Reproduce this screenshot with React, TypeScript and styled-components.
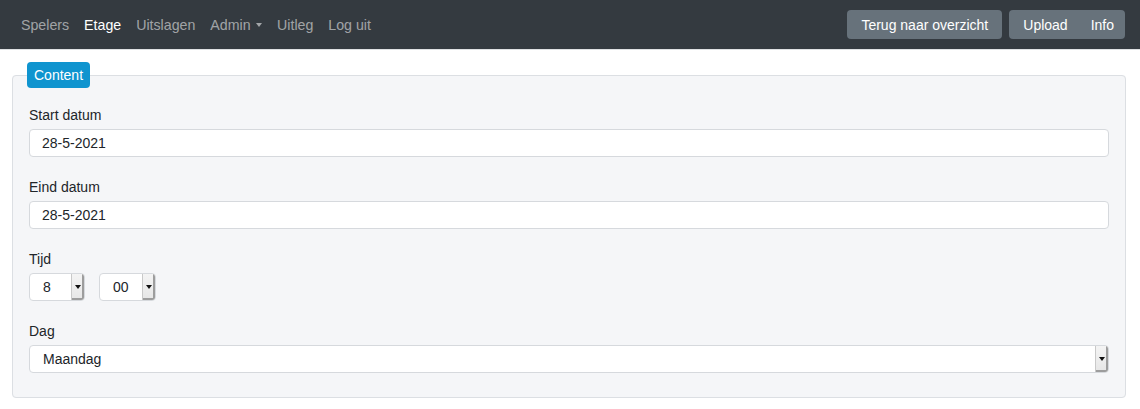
import React from "react";
import styled, { createGlobalStyle } from "styled-components";

const Global = createGlobalStyle`
  html, body { margin: 0; padding: 0; background: #ffffff; }
  body { font-family: "Liberation Sans", Arial, sans-serif; font-size: 14px; color: #212529; }
  * { box-sizing: border-box; }
`;

const NavBar = styled.nav`
  height: 49px;
  background: #343a40;
  display: flex;
  align-items: center;
  justify-content: space-between;
  padding: 0 15px 0 13.5px;
  box-shadow: 0 1px 0 #dfe1e3;
`;

const NavList = styled.ul`
  display: flex;
  list-style: none;
  margin: 0;
  padding: 0;
`;

const NavLink = styled.a<{ $active?: boolean }>`
  display: flex;
  align-items: center;
  padding: 0 7.5px;
  font-size: 14.2px;
  color: ${(p) => (p.$active ? "#ffffff" : "rgba(255,255,255,0.55)")};
  text-decoration: none;
  cursor: pointer;
`;

const Caret = styled.span`
  display: inline-block;
  margin-left: 5.5px;
  border-top: 4px solid currentColor;
  border-left: 3.5px solid transparent;
  border-right: 3.5px solid transparent;
`;

const Actions = styled.div`
  display: flex;
  gap: 7px;
`;

const Button = styled.button`
  height: 29px;
  padding: 0 14px;
  background: #67727b;
  color: #ffffff;
  border: none;
  border-radius: 4px;
  font-family: inherit;
  font-size: 14px;
  cursor: pointer;
`;

const ButtonGroup = styled.div`
  display: flex;
  background: #67727b;
  border-radius: 4px;
  & > ${Button} { border-radius: 0; background: transparent; }
  & > ${Button}:first-child { padding-right: 11px; }
  & > ${Button}:last-child { padding-left: 12px; padding-right: 11px; }
`;

const Main = styled.main`
  padding: 13px 14px 12px 12px;
`;

const Fieldset = styled.fieldset`
  margin: 0;
  padding: 0 16px 24px 16px;
  border: 1px solid #dcdfe3;
  border-radius: 4px;
  background: #f5f6f8;
  display: flex;
  flex-direction: column;
  gap: 20px;
`;

const Legend = styled.legend`
  margin-left: -2px;
  padding: 0 7px;
  height: 26px;
  line-height: 26px;
  background: #0f94cf;
  color: #ffffff;
  border-radius: 4px;
  font-size: 14px;
  margin-bottom: 17px;
`;

const Group = styled.div`
  display: flex;
  flex-direction: column;
  gap: 4px;
`;

const Label = styled.label`
  font-size: 14px;
  line-height: 20px;
  color: #212529;
`;

const Input = styled.input`
  height: 28px;
  width: 100%;
  padding: 0 12px;
  border: 1px solid #d6d9dd;
  border-radius: 4px;
  background: #ffffff;
  font-family: inherit;
  font-size: 14px;
  color: #212529;
  outline: none;
`;

const Row = styled.div`
  display: flex;
  gap: 14px;
`;

const SelectBox = styled.div<{ $width?: string }>`
  display: flex;
  height: 28px;
  width: ${(p) => p.$width ?? "100%"};
  border: 1px solid #d6d9dd;
  border-radius: 4px;
  background: #ffffff;
  overflow: hidden;
`;

const NativeSelect = styled.select`
  flex: 1;
  min-width: 0;
  appearance: none;
  -webkit-appearance: none;
  border: none;
  background: transparent;
  padding: 0 0 0 13px;
  font-family: inherit;
  font-size: 14px;
  color: #212529;
  outline: none;
`;

const Arrow = styled.span`
  width: 13px;
  flex: none;
  display: flex;
  align-items: center;
  justify-content: center;
  background: linear-gradient(#f4f4f4, #e6e6e6);
  border-left: 1px solid #c9c9c9;
  box-shadow: inset -2px -2px 0 #9d9d9d;
  &::after {
    content: "";
    margin: 0 1px 1px 0;
    border-top: 4px solid #111;
    border-left: 3px solid transparent;
    border-right: 3px solid transparent;
  }
`;

const Select: React.FC<{ value: string; width?: string; options: string[] }> = ({ value, width, options }) => (
  <SelectBox $width={width}>
    <NativeSelect defaultValue={value}>
      {options.map((o) => (
        <option key={o}>{o}</option>
      ))}
    </NativeSelect>
    <Arrow />
  </SelectBox>
);

export default function App() {
  return (
    <>
      <Global />
      <NavBar>
        <NavList>
          <li><NavLink>Spelers</NavLink></li>
          <li><NavLink $active>Etage</NavLink></li>
          <li><NavLink>Uitslagen</NavLink></li>
          <li><NavLink>Admin<Caret /></NavLink></li>
          <li><NavLink>Uitleg</NavLink></li>
          <li><NavLink>Log uit</NavLink></li>
        </NavList>
        <Actions>
          <Button>Terug naar overzicht</Button>
          <ButtonGroup>
            <Button>Upload</Button>
            <Button>Info</Button>
          </ButtonGroup>
        </Actions>
      </NavBar>
      <Main>
        <Fieldset>
          <Legend>Content</Legend>
          <Group>
            <Label>Start datum</Label>
            <Input defaultValue="28-5-2021" />
          </Group>
          <Group>
            <Label>Eind datum</Label>
            <Input defaultValue="28-5-2021" />
          </Group>
          <Group>
            <Label>Tijd</Label>
            <Row>
              <Select value="8" width="56px" options={["7", "8", "9"]} />
              <Select value="00" width="57px" options={["00", "15", "30", "45"]} />
            </Row>
          </Group>
          <Group>
            <Label>Dag</Label>
            <Select value="Maandag" options={["Maandag", "Dinsdag", "Woensdag", "Donderdag", "Vrijdag", "Zaterdag", "Zondag"]} />
          </Group>
        </Fieldset>
      </Main>
    </>
  );
}
